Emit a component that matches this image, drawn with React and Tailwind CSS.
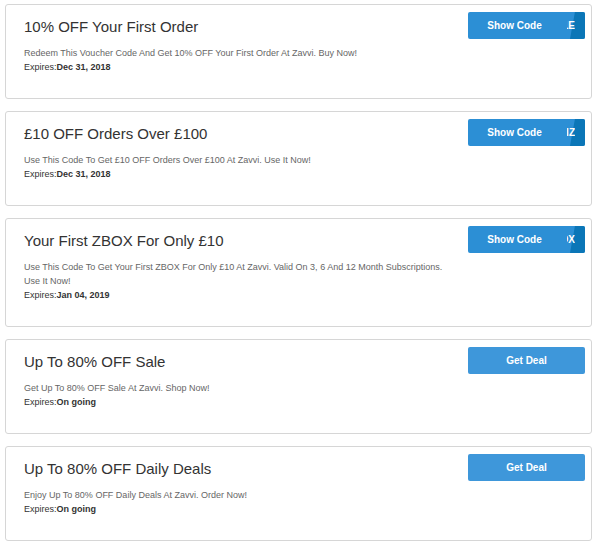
const offers = [
  {
    title: "10% OFF Your First Order",
    desc: "Redeem This Voucher Code And Get 10% OFF Your First Order At Zavvi. Buy Now!",
    expires: "Dec 31, 2018",
    code: "ZAVVI1E",
  },
  {
    title: "£10 OFF Orders Over £100",
    desc: "Use This Code To Get £10 OFF Orders Over £100 At Zavvi. Use It Now!",
    expires: "Dec 31, 2018",
    code: "ZAVVIZ",
  },
  {
    title: "Your First ZBOX For Only £10",
    desc: "Use This Code To Get Your First ZBOX For Only £10 At Zavvi. Valid On 3, 6 And 12 Month Subscriptions. Use It Now!",
    expires: "Jan 04, 2019",
    code: "ZBOX",
  },
  {
    title: "Up To 80% OFF Sale",
    desc: "Get Up To 80% OFF Sale At Zavvi. Shop Now!",
    expires: "On going",
  },
  {
    title: "Up To 80% OFF Daily Deals",
    desc: "Enjoy Up To 80% OFF Daily Deals At Zavvi. Order Now!",
    expires: "On going",
  },
];

function CodeButton({ code }) {
  return (
    <button className="relative w-[117px] h-[27px] rounded-[2px] bg-[#2c8fd5] text-white text-[10px] font-bold overflow-hidden">
      <div
        className="absolute top-0 bottom-0 right-0 w-[15px] bg-[#0b76b7]"
        style={{ clipPath: "polygon(33% 0, 100% 0, 100% 100%, 0 100%)" }}
      ></div>
      <span className="absolute left-0 top-0 bottom-0 w-[93px] flex items-center justify-center">
        Show Code
      </span>
      <span className="absolute top-0 bottom-0 right-[10px] w-[8px] flex items-center justify-end overflow-hidden whitespace-nowrap">
        {code}
      </span>
    </button>
  );
}

function DealButton() {
  return (
    <button className="w-[117px] h-[27px] rounded-[2px] bg-[#3e97da] text-white text-[10px] font-bold">
      Get Deal
    </button>
  );
}

export default function App() {
  return (
    <div
      className="w-[600px] bg-white pt-[4px] pl-[5px] flex flex-col gap-[12px]"
      style={{ fontFamily: '"Liberation Sans", Arial, sans-serif' }}
    >
      {offers.map((o) => (
        <div
          key={o.title}
          className="w-[587px] border border-[#d6d6d6] rounded-[3px] flex justify-between"
        >
          <div className="pl-[18px] pt-[12px] pb-[24px] w-[440px]">
            <h3 className="text-[15px] leading-[20px] text-[#333]">{o.title}</h3>
            <p className="mt-[9px] text-[9px] leading-[14px] text-[#666] max-w-[420px]">{o.desc}</p>
            <p className="text-[9px] leading-[14px] text-[#333]">
              Expires:<span className="font-bold">{o.expires}</span>
            </p>
          </div>
          <div className="pt-[7px] pr-[6px]">
            {o.code ? <CodeButton code={o.code} /> : <DealButton />}
          </div>
        </div>
      ))}
    </div>
  );
}
